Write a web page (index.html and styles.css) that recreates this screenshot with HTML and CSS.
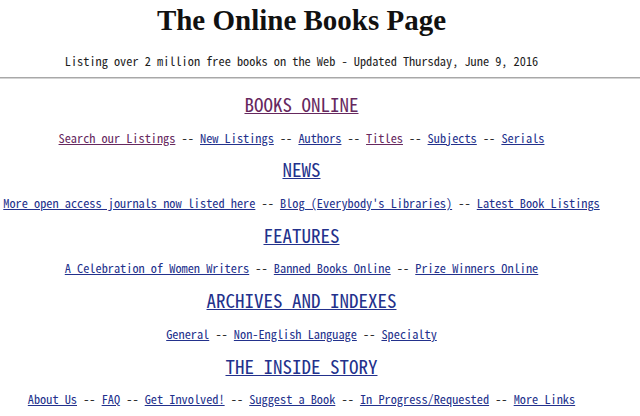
FILE: index.html
```html
<!DOCTYPE html>
<html lang="en">
<head>
<meta charset="utf-8">
<title>The Online Books Page</title>
<link rel="stylesheet" href="styles.css">
</head>
<body>
<header class="masthead">
  <h1 class="title">The Online Books Page</h1>
  <p class="tagline">Listing over 2 million free books on the Web - Updated Thursday, June 9, 2016</p>
</header>
<hr class="rule">
<main class="main">
  <section class="section">
    <h2 class="section-title"><a class="visited" href="#">BOOKS ONLINE</a></h2>
    <p class="links"><a class="visited" href="#">Search our Listings</a> -- <a href="#">New Listings</a> -- <a href="#">Authors</a> -- <a class="visited" href="#">Titles</a> -- <a href="#">Subjects</a> -- <a href="#">Serials</a></p>
  </section>
  <section class="section">
    <h2 class="section-title"><a href="#">NEWS</a></h2>
    <p class="links"><a href="#">More open access journals now listed here</a> -- <a href="#">Blog (Everybody's Libraries)</a> -- <a href="#">Latest Book Listings</a></p>
  </section>
  <section class="section">
    <h2 class="section-title"><a href="#">FEATURES</a></h2>
    <p class="links"><a href="#">A Celebration of Women Writers</a> -- <a href="#">Banned Books Online</a> -- <a href="#">Prize Winners Online</a></p>
  </section>
  <section class="section">
    <h2 class="section-title"><a href="#">ARCHIVES AND INDEXES</a></h2>
    <p class="links"><a href="#">General</a> -- <a href="#">Non-English Language</a> -- <a href="#">Specialty</a></p>
  </section>
  <section class="section">
    <h2 class="section-title"><a href="#">THE INSIDE STORY</a></h2>
    <p class="links"><a href="#">About Us</a> -- <a href="#">FAQ</a> -- <a href="#">Get Involved!</a> -- <a href="#">Suggest a Book</a> -- <a href="#">In Progress/Requested</a> -- <a href="#">More Links</a></p>
  </section>
</main>
</body>
</html>
```
FILE: styles.css
```css
html, body {
  margin: 0;
  padding: 0;
  background: #ffffff;
}

body {
  font-family: "Noto Sans Mono CJK SC", "Liberation Mono", monospace;
  color: #1a1a1a;
}

.masthead {
  width: 603px;
  text-align: center;
}

.title {
  margin: 0;
  padding-top: 2px;
  font-family: "Liberation Serif", "DejaVu Serif", serif;
  font-weight: bold;
  font-size: 29px;
  line-height: 36px;
  color: #111111;
}

.tagline {
  margin: 0;
  padding-top: 13px;
  font-size: 12.3px;
  line-height: 20px;
  color: #1e1e1e;
}

.rule {
  margin: 6px 0 0 0;
  height: 0;
  border: none;
  border-top: 1px solid #a8a8a8;
  border-bottom: 1px solid #d4d4d4;
}

.main {
  width: 603px;
  padding-top: 9px;
  text-align: center;
}

.section-title {
  margin: 0 0 3px 0;
  font-weight: normal;
  font-size: 19px;
  line-height: 32.5px;
}

.links {
  margin: 0;
  font-size: 12.3px;
  line-height: 29.9px;
  color: #1e1e1e;
}

a {
  color: #23318c;
  text-decoration: underline;
}

a.visited {
  color: #66285e;
}
```
